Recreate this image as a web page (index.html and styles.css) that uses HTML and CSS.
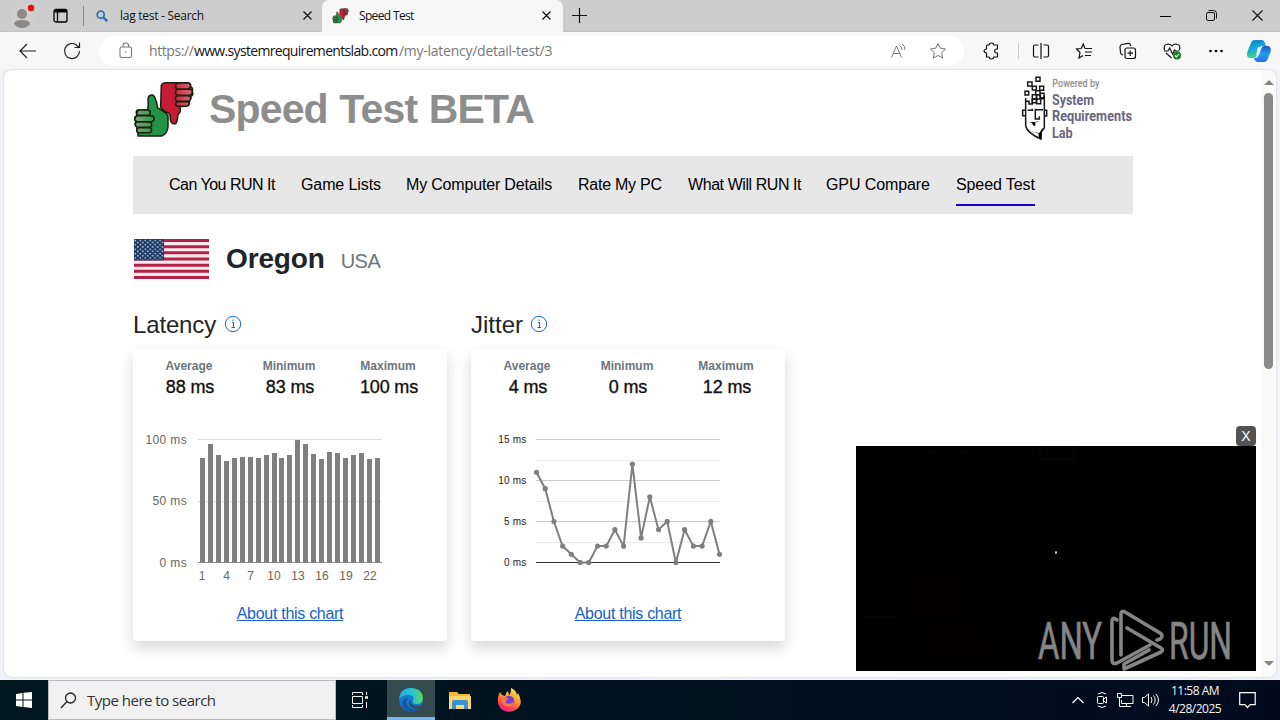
FILE: index.html
```html
<!DOCTYPE html>
<html lang="en">
<head>
<meta charset="utf-8">
<title>Speed Test</title>
<link rel="stylesheet" href="styles.css">
</head>
<body>
<div class="desktop">
  <header class="tabs">
    <div class="profile"><svg width="26" height="28" viewBox="0 0 26 28"><circle cx="11" cy="15" r="11" fill="#d2d0ce"/><circle cx="11" cy="12" r="5" fill="#8c8987"/><path d="M3 22q0-4 8-4t8 4q-3 4-8 4t-8-4" fill="#8c8987"/><circle cx="20" cy="6" r="3.200" fill="#e30b17"/></svg></div>
    <div class="workspaces"><svg width="16" height="16" viewBox="0 0 16 16" fill="none" stroke="#000" stroke-width="1.300"><rect x="1" y="1.500" width="13" height="12.500" rx="2"/><path d="M4.500 4v10" /><path d="M1.500 3h12" stroke-width="3"/></svg></div>
    <div class="tab idle">
      <svg width="12" height="12" viewBox="0 0 12 12" fill="none" stroke="#2873bb"><circle cx="4.700" cy="4.700" r="3.500" stroke-width="1.700"/><path d="M7.200 7.200l4 4" stroke-width="2.300"/></svg>
      <span class="tab-title lag">lag test - Search</span>
      <svg class="close" width="9" height="9" viewBox="0 0 9 9"><path d="M.5.5l8 8m0-8l-8 8" stroke="#111" stroke-width="1.200"/></svg>
    </div>
    <div class="tab active">
      <svg width="17" height="16" viewBox="20 30 190 180"><use href="#thumbs"/></svg>
      <span class="tab-title speed">Speed Test</span>
      <svg class="close" width="9" height="9" viewBox="0 0 9 9"><path d="M.5.5l8 8m0-8l-8 8" stroke="#111" stroke-width="1.200"/></svg>
    </div>
    <svg class="new-tab" width="15" height="15" viewBox="0 0 15 15"><path d="M0 7.500h15M7.500 0v15" stroke="#111" stroke-width="1.200"/></svg>
    <div class="window-buttons">
      <span><svg width="11" height="11" viewBox="0 0 11 11"><path d="M0 6.500h11" stroke="#000"/></svg></span>
      <span><svg width="11" height="11" viewBox="0 0 11 11" fill="none" stroke="#111"><rect x=".5" y="2.500" width="8" height="8" rx="1.500"/><path d="M2.500.5h5q3 0 3 3v5"/></svg></span>
      <span><svg width="11" height="11" viewBox="0 0 11 11"><path d="M.5.5l10 10m0-10l-10 10" stroke="#111" stroke-width="1.100"/></svg></span>
    </div>
  </header>

  <div class="toolbar">
    <span class="nav-button back"><svg width="18" height="16" viewBox="0 0 18 16" fill="none" stroke="#222" stroke-width="1.200"><path d="M17 8H1m7-7L1 8l7 7"/></svg></span>
    <span class="nav-button"><svg width="18" height="18" viewBox="0 0 18 18" fill="none" stroke="#222" stroke-width="1.200"><path d="M16.500 9A7.500 7.500 0 1 1 13 2.700l3 2.500M16.500.5V5.500h-5"/></svg></span>
    <div class="address">
      <svg width="14" height="17" viewBox="0 0 14 17" fill="none" stroke="#777" stroke-width="1.100"><rect x="1" y="5" width="11.500" height="10.500" rx="1.800"/><path d="M4 5V3.500q0-2.500 2.800-2.500t2.800 2.500V5"/><circle cx="6.800" cy="10" r=".8" fill="#777" stroke="none"/></svg>
      <div class="url"><span class="dim protocol">https://</span><span class="host">www.systemrequirementslab.com</span><span class="dim path">/my-latency/detail-test/3</span></div>
      <svg class="read" width="18" height="18" viewBox="0 0 18 18" fill="none" stroke="#777"><path d="M2.500 15.500L7.500 4l5 11.500M4.500 11.500h6M11 4q2 1 2 4M13 2q3.500 2 3 6"/></svg>
      <svg class="star" width="18" height="18" viewBox="0 0 18 18" fill="none" stroke="#777" stroke-linejoin="round"><path d="M9 1.500l2.300 4.700 5.200.8-3.800 3.700.9 5.300L9 13.500 4.400 16l.9-5.300L1.500 7l5.200-.8z"/></svg>
    </div>
    <div class="actions">
      <span><svg width="18" height="18" viewBox="0 0 18 18" fill="none" stroke="#111" stroke-width="1.200" stroke-linejoin="round"><path d="M5 3h2q.5-2 2.500-2T12 3h3.500v4h-1q-2 .3-2 2t2 2h1v4H12q-.5 2-2.500 2T7 15H4.500v-4Q2 10.500 2 9t2.500-2V4z"/></svg></span>
      <span class="split"><svg width="18" height="18" viewBox="0 0 18 18" fill="none" stroke="#111" stroke-width="1.200"><path d="M6.500 3H3q-1.500 0-1.500 1.500v9Q1.500 15 3 15h3.500M9 1v16M11.500 3H15q1.500 0 1.500 1.500v9q0 1.500-1.500 1.500h-3.500"/></svg></span>
      <span><svg width="18" height="18" viewBox="0 0 18 18" fill="none" stroke="#111" stroke-width="1.200"><path d="M10 6.500L8.200 2 6.200 6.500 1.500 7l3.500 3.500L4 16l4-2.500M10 6.500h7M10 10h7M10 13.500h6"/></svg></span>
      <span><svg width="18" height="18" viewBox="0 0 18 18" fill="none" stroke="#111" stroke-width="1.200"><rect x="6" y="6" width="10.500" height="10.500" rx="2"/><path d="M11.200 8.500v5.500M8.500 11.200H14M4 13Q2 13 1.500 10.500L1 5q0-2 2-2.500l6-1.200q2-.2 2.500 1.700l.3 1"/></svg></span>
      <span><svg width="18" height="18" viewBox="0 0 18 18" fill="none" stroke="#111" stroke-width="1.100"><path d="M1.500 8Q0 2.500 5 2q2.500 0 4 2 1.500-2 4-2 5 .5 3.500 6M3 11l5.500 5M1 9h4l1.700-3L9.500 12l2-4 1 1h4"/><circle cx="14" cy="13.500" r="4" fill="#16831d" stroke="none"/><path d="M12 13.500l1.500 1.500 2.500-3" stroke="#fff"/></svg></span>
      <span><svg width="16" height="4" viewBox="0 0 16 4"><circle cx="2.500" cy="2" r="1.300"/><circle cx="8" cy="2" r="1.300"/><circle cx="13.500" cy="2" r="1.300"/></svg></span>
      <span class="copilot"><svg width="26" height="24" viewBox="0 0 26 24"><defs><linearGradient id="cpA" x2=".3" y2="1"><stop stop-color="#0877c8"/><stop offset=".5" stop-color="#16a8d8"/><stop offset="1" stop-color="#46d582"/></linearGradient><linearGradient id="cpB" x2="0" y2="1"><stop stop-color="#1759c7"/><stop offset=".5" stop-color="#219bea"/><stop offset="1" stop-color="#2f6cf2"/></linearGradient></defs><path d="M9 1h7q2 0 3 3l1 3h-4q-2 0-3 3l-2 6q-1 3-3 3H4q-5-1-2-8L5 4q1-3 4-3z" fill="url(#cpA)"/><path d="M19 7h3q4 1 2.500 6L22 19q-1 4-4 4h-6q-3 0-4-4h2q2 0 3-4l2-6q1-2 4-2z" fill="url(#cpB)"/><path d="M12 8h4l-3 8h-3z" fill="#dff3ff"/></svg></span>
    </div>
  </div>

  <div class="frame">
    <div class="viewport">
      <main class="page">
        <div class="masthead">
          <svg class="thumb-logo" width="63.300" height="60" viewBox="20 30 190 180">
            <defs>
              <linearGradient id="greenFinger"><stop stop-color="#7fa67a"/><stop offset="1" stop-color="#2c9a48"/></linearGradient>
              <linearGradient id="redFinger"><stop stop-color="#cc263e"/><stop offset="1" stop-color="#da6d78"/></linearGradient>
            </defs>
            <g id="thumbs" stroke="#17210e" stroke-width="4.500" stroke-linejoin="round">
              <path d="M39 120q-7 0-6 9 0 6 4 8-9 0-9 9 0 8 6 9-6 3-5 9 1 7 8 8-4 3-3 9 0 6 4 7v10h71q17-6 19-27v-34q-11-15-31-23-6-36-15-39-12-2-14 12 2 20-1 33z" fill="#239447"/>
              <path d="M39 120h28q8 0 8 8t-8 8H37q-5-8 2-16zM36 137h41q9 0 9 9t-9 9H34q-12-9 2-18zM35 156h36q8 0 8 8t-8 8H36q-12-8-1-16zM38 173h34q7 0 7 7t-7 8H38q-7-8 0-15z" fill="url(#greenFinger)"/>
              <path d="M108 46q3-8 14-8h67q9 3 7 12 8 3 5 14 5 11-4 15 1 9-5 11 3 13-6 16-10 4-22 4 4 17-6 23-2 24-7 28-14 3-16-12 1-14-5-20-14-3-24-18z" fill="#c71c36"/>
              <path d="M158 39h29q9 1 8 9t-9 9h-28q-8-2-8-9t8-9zM157 58h37q8 2 7 9t-9 9h-34q-8-2-8-9t7-9zM157 77h32q8 2 7 9t-9 8h-30q-7-2-7-8t7-9zM158 95h29q6 2 5 7t-8 7h-26q-7-1-7-7t7-7z" fill="url(#redFinger)"/>
            </g>
          </svg>
          <h1>Speed Test BETA</h1>
          <svg class="lab-logo" width="115" height="66.700" viewBox="60 15 345 200">
            <g fill="#fff" stroke="#171717" stroke-width="4.500"><path d="M75 64h11v11H75zM119 49h12v12h-12zM107 62h13v12h-13zM97 74h13v13H97zM109 75h12v12h-12zM120 70h12v13h-12zM97 88h12v10H97z"/><path d="M108 22h12v12h-12zM83 36h13v12H83zM97 49h12v11H97z"/><path d="M77 84v84q4 21 46 39v-20l10-13V77M77 94h10v8h10V87h13v14h12V86h11" fill="none"/><path d="M76 121h-8v16h8M133 121h7v17h-7" fill="none"/></g>
            <path d="M83 121h14v-5M106 116v31h12v-8M108 119h21" fill="none" stroke="#171717" stroke-width="4.500"/><path d="M87 155q18 3 31-2-6 4-12 4v9q-4 4-7-1l-3-6zM78 172q12 14 34 18 10-1 12-10l4-8-5 36-6-5-2-14q-22-2-37-17z"/>
            <text class="lab-small" x="157" y="50" textLength="141" lengthAdjust="spacingAndGlyphs">Powered by</text>
            <g class="lab-name"><text x="156" y="106" textLength="126" lengthAdjust="spacingAndGlyphs">System</text><text x="156" y="154" textLength="240" lengthAdjust="spacingAndGlyphs">Requirements</text><text x="156" y="204" textLength="62" lengthAdjust="spacingAndGlyphs">Lab</text></g>
          </svg>
        </div>
        <nav class="menu">
          <a class="m-can">Can You RUN It</a><a class="m-game">Game Lists</a><a class="m-computer">My Computer Details</a><a class="m-rate">Rate My PC</a><a class="m-what">What Will RUN It</a><a class="m-gpu">GPU Compare</a><a class="m-speed selected">Speed Test</a>
        </nav>
        <div class="location">
          <svg class="flag" width="75" height="40" viewBox="0 0 76 41" preserveAspectRatio="none"><defs><pattern id="stars" width="5" height="4.500" patternUnits="userSpaceOnUse"><circle cx="1.400" cy="1.400" r=".8" fill="#dce4ec"/><circle cx="3.900" cy="3.600" r=".8" fill="#dce4ec"/></pattern></defs><rect width="76" height="41" fill="#fae8ec"/><path d="M0 1.500h76M0 7.830h76M0 14.160h76M0 20.500h76M0 26.830h76M0 33.160h76M0 39.500h76" stroke="#b22247" stroke-width="3.100"/><rect width="30.500" height="22" fill="#1c3a66"/><rect width="30" height="21" fill="url(#stars)"/></svg>
          <h2>Oregon</h2><span class="country">USA</span>
        </div>
        <div class="metrics">
          <section>
            <h3><span class="latency">Latency</span><svg width="18" height="18" viewBox="0 0 18 18" fill="none" stroke="#1765d8"><circle cx="9" cy="9" r="7.700"/><path d="M8 7.500h1.500v5M7.500 12.500h3.500M9 4.500v1.500"/></svg></h3>
            <div class="card">
              <div class="stats"><div><b>Average</b><strong>88 ms</strong></div><div><b>Minimum</b><strong>83 ms</strong></div><div><b>Maximum</b><strong>100 ms</strong></div></div>
              <svg class="chart" width="314" height="170" viewBox="133 420 314 170">
                <path d="M198 439.500h184M198 501.500h184" stroke="#dedede"/><path d="M198 562.500h184" stroke="#888"/>
                <path d="M202.500 458V562M210.500 444V562M218.500 455V562M226.500 461V562M234.500 458V562M242.500 457V562M250.500 457V562M258.500 458V562M266.500 455V562M274.500 453V562M281.500 458V562M289.500 455V562M297.500 440V562M305.500 444V562M313.500 454V562M321.500 459V562M329.500 452V562M337.500 453V562M345.500 458V562M353.500 455V562M361.500 453V562M369.500 459V562M377.500 458V562" stroke="#7f7f7f" stroke-width="5"/>
                <g class="axis y"><text x="187" y="444">100 ms</text><text x="187" y="505">50 ms</text><text x="187" y="567">0 ms</text></g>
                <g class="axis x"><text x="202" y="580">1</text><text x="226.500" y="580">4</text><text x="250.500" y="580">7</text><text x="274" y="580">10</text><text x="298" y="580">13</text><text x="322" y="580">16</text><text x="346" y="580">19</text><text x="370" y="580">22</text></g>
              </svg>
              <a class="about">About this chart</a>
            </div>
          </section>
          <section>
            <h3><span class="jitter">Jitter</span><svg width="18" height="18" viewBox="0 0 18 18" fill="none" stroke="#1765d8"><circle cx="9" cy="9" r="7.700"/><path d="M8 7.500h1.500v5M7.500 12.500h3.500M9 4.500v1.500"/></svg></h3>
            <div class="card">
              <div class="stats"><div><b>Average</b><strong>4 ms</strong></div><div><b>Minimum</b><strong>0 ms</strong></div><div><b>Maximum</b><strong>12 ms</strong></div></div>
              <svg class="chart" width="314" height="170" viewBox="471 420 314 170">
                <defs><marker id="dot" markerUnits="userSpaceOnUse" markerWidth="6" markerHeight="6" refX="3" refY="3"><circle cx="3" cy="3" r="2.600" fill="#7f7f7f"/></marker></defs>
                <path d="M536 460.500h184M536 501.500h184M536 542.500h184" stroke="#ececec"/><path d="M536 439.500h184M536 480.500h184M536 521.500h184" stroke="#ccc"/><path d="M536 562.500h184" stroke="#333"/>
                <polyline points="536.500,472.300 545.200,488.700 553.900,521.500 562.600,546.100 571.300,554.300 580.100,562.500 588.800,562.500 597.500,546.100 606.200,546.100 614.900,529.700 623.600,546.100 632.400,464.100 641.100,537.900 649.800,496.900 658.500,529.700 667.200,521.500 675.900,562.500 684.600,529.700 693.400,546.100 702.100,546.100 710.800,521.500 719.500,554.300" fill="none" stroke="#7f7f7f" stroke-width="2" marker-start="url(#dot)" marker-mid="url(#dot)" marker-end="url(#dot)"/>
                <g class="axis y small"><text x="526.500" y="443">15 ms</text><text x="526.500" y="484">10 ms</text><text x="526.500" y="525">5 ms</text><text x="526.500" y="566">0 ms</text></g>
              </svg>
              <a class="about">About this chart</a>
            </div>
          </section>
        </div>
      </main>
      <div class="scrollbar"><i class="up"></i><i class="thumb"></i><i class="down"></i></div>
      <aside class="video">
        <button>X</button>
        <svg width="400" height="225" viewBox="0 0 400 225">
          <rect width="400" height="225" fill="#000"/><g fill="#040001"><path d="M61 130h42v36H61zM76 179h57v30H76z"/></g><path d="M184 2h34v11h-34zM4 171h40M70 6h12M101 6h12" fill="none" stroke="#090909"/>
          <ellipse cx="200" cy="106.500" rx=".8" ry="1.500" fill="#fff"/>
          <g class="watermark"><text x="182" y="213" textLength="64" lengthAdjust="spacingAndGlyphs">ANY</text><text x="313" y="213" textLength="63" lengthAdjust="spacingAndGlyphs">RUN</text></g>
          <g fill="none" stroke="#858585" stroke-width="3.600" stroke-linejoin="round" stroke-linecap="round"><path d="M261 174q-5-4-5 2v38q0 5 5 3l33-18"/><path d="M301 194l3-1q4-3 0-6l-35-21q-4-2-4 2v41M271 182l34 20q3 2 0 4l-37 17v-5l25-14"/></g>
        </svg>
      </aside>
    </div>
  </div>

  <footer class="taskbar">
    <span class="start"><svg width="16" height="16" viewBox="0 0 16 16" fill="#fff"><path d="M0 2l6.500-1v6.500H0zM7.500.8L16 0v7.500H7.500zM0 8.500h6.500V15L0 14zM7.500 8.500H16V16l-8.500-1z"/></svg></span>
    <div class="search"><svg width="17" height="17" viewBox="0 0 17 17" fill="none" stroke="#222" stroke-width="1.300"><circle cx="10.500" cy="6" r="5"/><path d="M7 9.500L1 16"/></svg><span>Type here to search</span></div>
    <span class="task"><svg width="16" height="16" viewBox="0 0 16 16" fill="none" stroke="#eee"><path d="M.5 3V.5h10V3M.5 13v2.500h10V13M.5 4.500h10v7H.5zM14.500 0v3M14.500 10v6"/><path d="M13 5.500h3" stroke-width="2.500"/></svg></span>
    <span class="task edge"><svg width="24" height="24" viewBox="0 0 24 24"><defs><linearGradient id="edgeTop"><stop stop-color="#26a8de"/><stop offset=".55" stop-color="#28c3d0"/><stop offset="1" stop-color="#5ed65d"/></linearGradient></defs><circle cx="12" cy="12" r="11.800" fill="#137acd"/><path d="M0 11Q1 0 12 0q11 0 12 10 0 6-7 6-4 0-3-3 2-6-4-6-7 0-10 4z" fill="url(#edgeTop)"/><path d="M9 10q-4 8 4 11 4 1 8-2-4 5-9 5-8-1-9-8 0-6 6-6z" fill="#1459a9"/><path d="M11 12q1 6 7 6 3 0 5-1l-2 3q-6 2-9-1-3-3-1-7z" fill="#354b50"/></svg></span>
    <span class="task"><svg width="22" height="19" viewBox="0 0 22 19"><path d="M0 1h8l2 2h11v15H0z" fill="#f5b731"/><path d="M0 5h22v13H0z" fill="#ffd669"/><path d="M3 18v-7q0-2 2-2h12q2 0 2 2v7h-4v-4H7v4z" fill="#3b91d4"/></svg></span>
    <span class="task"><svg width="24" height="24" viewBox="0 0 24 24"><defs><linearGradient id="fire" x1=".8" x2=".3" y2="1"><stop stop-color="#fff04b"/><stop offset=".45" stop-color="#ff982b"/><stop offset=".75" stop-color="#ff4557"/><stop offset="1" stop-color="#e11986"/></linearGradient></defs><path d="M3 4l2 3 3 1q1-4 3-5l1 4q2-1 2-7 5 2 6 7l1-2q6 10-1 16-8 6-16 0-6-8-1-17z" fill="url(#fire)"/><circle cx="12" cy="13" r="5.300" fill="#7542d6"/><path d="M5 11q3-3 7 0-4 0-3 4 4 2 8-1-2 6-8 4-5-2-4-7z" fill="#ff7939"/></svg></span>
    <div class="tray">
      <svg width="12" height="8" viewBox="0 0 12 8" fill="none" stroke="#fff" stroke-width="1.200"><path d="M.5 7L6 1.500 11.500 7"/></svg>
      <svg width="14" height="16" viewBox="0 0 14 16" fill="none" stroke="#fff"><rect x="2.500" y="4.500" width="6" height="7" rx="1"/><path d="M8.500 7l3-2v6l-3-2M3 2q4-3 8 0M3 14q4 3 8 0"/></svg>
      <svg width="17" height="14" viewBox="0 0 17 14" fill="none" stroke="#fff"><path d="M5 2.500h11v8H4.500V7M9.500 10.500v3M6 13.500h8M.5.5h4v4h-4zM2.500 4.500v9h4"/></svg>
      <svg width="18" height="14" viewBox="0 0 18 14" fill="none" stroke="#fff"><path d="M.5 4.500h2l4-3.500v12l-4-3.500h-2zM9 4q2 3 0 6M11.500 2.500q3.500 4.500 0 9M14 1q5 6 0 12"/></svg>
      <div class="clock"><span>11:58 AM</span><span>4/28/2025</span></div>
      <svg class="notice" width="17" height="17" viewBox="0 0 17 17" fill="none" stroke="#fff" stroke-width="1.200"><path d="M.7.7h15.500v12h-5L8.500 15.500 6 12.700H.7z"/></svg>
    </div>
  </footer>
</div>
</body>
</html>
```

FILE: styles.css
```css
* { box-sizing: border-box; }
body { margin: 0; font-family: "Liberation Sans", Arial, sans-serif; color: #212529; }
h1, h2, h3 { margin: 0; }
svg { display: block; flex: none; }
.desktop { width: 1280px; height: 720px; display: flex; flex-direction: column; overflow: hidden; background: #f7f7f7; }
.tabs, .toolbar, .taskbar { font-family: "Open Sans", "Noto Sans", sans-serif; flex: none; }
.tabs { height: 32px; display: flex; align-items: center; background: #cdcdcd; border-bottom: 1px solid #c2c2c2; }
.profile { width: 53px; padding-left: 11px; }
.workspaces { width: 31px; height: 20px; padding-top: 2px; border-right: 1px solid #888; }
.tab { height: 32px; display: flex; align-items: center; }
.idle { width: 237px; padding-left: 12px; }
.idle .tab-title { margin-left: 12px; }
.active { width: 241px; margin-left: 1px; padding-left: 10px; background: #f7f7f7; border-radius: 7px 7px 0 0; }
.active .tab-title { margin-left: 10px; }
.tab-title { font-size: 12px; line-height: 18px; color: #111; white-space: nowrap; }
.lag { letter-spacing: -.27px; }
.speed { letter-spacing: -.65px; }
.close { margin-left: auto; margin-right: 9px; }
.active .close { margin-right: 12px; }
.new-tab { margin-left: 9px; }
.window-buttons { display: flex; margin-left: auto; }
.window-buttons span { width: 46px; display: flex; justify-content: center; }
.toolbar { height: 37px; display: flex; align-items: center; padding-left: 6px; background: #f7f7f7; }
.nav-button { width: 44px; display: flex; justify-content: center; }
.address { width: 865px; height: 30px; margin-left: 5px; border-radius: 15px; background: #fff; display: flex; align-items: center; padding: 0 17px 0 20px; }
.url { display: flex; margin-left: 16px; font-size: 14px; line-height: 20px; color: #111; white-space: nowrap; }
.protocol { width: 45px; letter-spacing: -.4px; }
.host { width: 205px; letter-spacing: -.67px; }
.path { letter-spacing: -.26px; }
.dim { color: #777; }
.read { margin-left: auto; }
.star { margin-left: 22px; }
.actions { display: flex; align-items: center; margin-left: 5px; }
.actions span { width: 44px; height: 24px; display: flex; align-items: center; justify-content: center; }
.actions .split { width: 44px; height: 16px; margin-left: 5px; border-left: 1px solid #ccc; }
.actions .copilot { width: 41px; }
.frame { height: 611px; padding: 1px 4px 3px; background: #f0f3f7; }
.viewport { height: 607px; position: relative; display: flex; background: #fff; border-radius: 8px; box-shadow: 0 0 2px #bbb; overflow: hidden; }
.page { width: 1258px; padding-left: 129px; }
.masthead { height: 86px; width: 1000px; display: flex; align-items: flex-start; }
.thumb-logo { margin: 10px 0 0 -1.300px; }
.masthead h1 { font-size: 41px; line-height: 48px; letter-spacing: -.85px; word-spacing: 1px; color: #8d8d8d; margin: 15px 0 0 14px; white-space: nowrap; }
.lab-logo { margin: 5px -2px 0 auto; overflow: visible; }
.lab-small, .lab-name { font-family: "Liberation Sans Narrow", "Roboto", sans-serif; font-weight: 500; font-size: 35px; fill: #8e8e8e; }
.lab-name { font-size: 46px; font-weight: bold; fill: #686680; }
.menu { width: 1000px; height: 58px; background: #e7e7e7; display: flex; align-items: flex-start; padding: 8px 0 0 36px; color: #000; font-size: 16px; }
.menu a { height: 42px; line-height: 41px; white-space: nowrap; }
.m-can { width: 132px; letter-spacing: -.5px; }
.m-game { width: 105px; letter-spacing: -.1px; }
.m-computer { width: 172px; letter-spacing: -.18px; }
.m-rate { width: 110px; letter-spacing: -.25px; }
.m-what { width: 138px; letter-spacing: -.43px; }
.m-gpu { width: 130px; letter-spacing: -.1px; }
.m-speed { width: 79px; letter-spacing: -.1px; }
.selected { border-bottom: 2px solid #1700c9; }
.location { height: 90px; display: flex; align-items: center; }
.flag { margin-left: 1px; }
.location h2 { font-size: 28px; line-height: 34px; margin-left: 17px; letter-spacing: -.15px; }
.country { font-size: 20px; line-height: 24px; margin: 4px 0 0 16px; color: #6c757d; letter-spacing: -.5px; }
.metrics { display: flex; gap: 24px; }
.metrics section { width: 314px; }
.metrics h3 { height: 45px; display: flex; align-items: center; font-size: 24px; line-height: 28px; font-weight: 400; padding-bottom: 4px; }
.metrics h3 svg { margin: -1px 0 0 7px; }
.latency { width: 84px; letter-spacing: -.15px; }
.jitter { width: 52px; letter-spacing: 0; }
.card { height: 292px; padding-top: 9px; background: #fff; border-radius: 4px; box-shadow: 0 7px 15px rgba(0, 0, 0, .16); }
.stats { display: flex; height: 62px; padding-left: 7px; }
.stats div { width: 100px; display: flex; flex-direction: column; align-items: center; }
.stats div:last-child { width: 98px; }
.stats b { font-size: 12px; line-height: 16px; color: #6c757d; letter-spacing: 0; margin-left: -2px; }
.stats strong { font-size: 18px; line-height: 26px; font-weight: 500; color: #111; letter-spacing: -.15px; -webkit-text-stroke: .35px #111; }
.axis { font-size: 12px; fill: #666; }
.axis.y { text-anchor: end; letter-spacing: .35px; }
.axis.x { text-anchor: middle; }
.axis.small { font-size: 10px; letter-spacing: .2px; fill: #222; }
.about { display: block; text-align: center; font-size: 16px; line-height: 20px; margin-top: 14px; text-decoration: underline; text-underline-offset: 1px; color: #1763c5; letter-spacing: -.29px; }
.scrollbar { width: 13px; background: #fafafa; border-left: 1px solid #f2f2f2; display: flex; flex-direction: column; align-items: center; padding: 10px 1px 11px 0; }
.up, .down { width: 0; border: 5px solid transparent; flex: none; }
.up { border-top: 0; border-bottom: 5px solid #858585; }
.down { border-bottom: 0; border-top: 5px solid #858585; margin-top: auto; }
.thumb { width: 9px; height: 276px; margin-top: 8px; background: #8a8a8a; border-radius: 5px; flex: none; }
.video { position: absolute; left: 852px; top: 356px; width: 400px; }
.video button { display: block; margin-left: auto; width: 20px; height: 20px; padding: 0; border: 0; border-radius: 4px; background: #535353; color: #fff; font: 14px/20px "Liberation Sans", sans-serif; }
.video svg { overflow: visible; }
.watermark { font-family: "Liberation Sans Narrow", "Roboto", sans-serif; font-size: 52px; fill: #858585; stroke: #858585; stroke-width: .7px; }
.taskbar { height: 40px; display: flex; background: linear-gradient(90deg, #001720, #00121f 50%, #020b1e); }
.start { width: 48px; display: flex; align-items: center; justify-content: center; }
.search { width: 288px; background: #f1f1f1; border: 1px solid #bbb; display: flex; align-items: center; padding-left: 11px; }
.search span { margin-left: 10px; font-size: 15px; line-height: 20px; color: #333; letter-spacing: -.5px; white-space: nowrap; }
.task { width: 48px; display: flex; align-items: center; justify-content: center; margin-right: 1px; }
.task.edge { background: #354b50; border-bottom: 3px solid #76b9ed; padding-top: 2px; margin-left: 2px; }
.tray { margin-left: auto; display: flex; align-items: center; padding-right: 24px; }
.tray svg + svg { margin-left: 8px; }
.tray svg:nth-child(2) { margin-left: 11px; }
.clock { width: 60px; margin-left: 5px; display: flex; flex-direction: column; align-items: center; font-size: 12px; line-height: 18px; color: #f5f5f5; letter-spacing: -.5px; }
.notice { margin-left: 14px; }
```
